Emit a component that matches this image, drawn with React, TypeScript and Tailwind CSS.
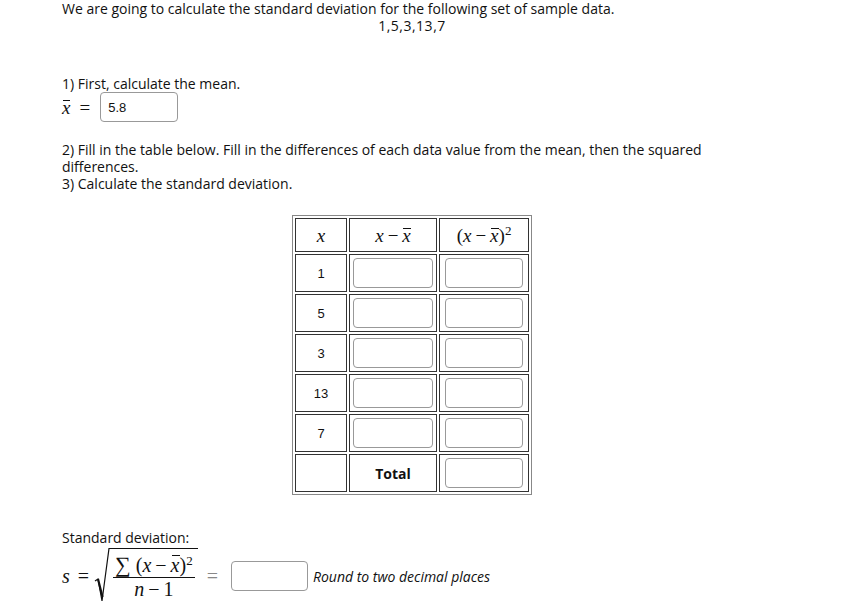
import React from "react";

const body = { fontFamily: '"Open Sans", "Noto Sans", sans-serif' };
const math = { fontFamily: '"Liberation Serif", "DejaVu Serif", serif' };
const arial = { fontFamily: '"Liberation Sans", Arial, sans-serif' };

function XBar() {
  return (
    <span className="relative inline-block italic">
      x
      <span className="absolute left-[1px] right-[0px] top-[1px] h-[1px] bg-current" />
    </span>
  );
}

function Minus() {
  return <span className="mx-[4px]">−</span>;
}

function Box({ w = "w-[78px]", children }: { w?: string; children?: React.ReactNode }) {
  return (
    <div
      className={`${w} h-[30px] rounded-[4px] border border-[#999] bg-white flex items-center px-[7px] text-[13px] text-[#111]`}
      style={arial}
    >
      {children}
    </div>
  );
}

export default function App() {
  const rows = ["1", "5", "3", "13", "7"];
  return (
    <div className="w-[861px] h-[606px] bg-white text-[#111] overflow-hidden" style={body}>
      <div className="ml-[62px] w-[700px] text-[14px] leading-[17px]">
        <div>We are going to calculate the standard deviation for the following set of sample data.</div>
        <div className="text-center tracking-[0.5px]">1,5,3,13,7</div>

        <div className="mt-[41px]">1) First, calculate the mean.</div>
        <div className="flex items-center h-[30px]">
          <span className="text-[19px] flex items-center" style={math}>
            <XBar />
            <span className="ml-[9px]">=</span>
          </span>
          <div className="ml-[10px]"><Box>5.8</Box></div>
        </div>

        <div className="mt-[19px]">
          2) Fill in the table below. Fill in the differences of each data value from the mean, then the squared differences.
        </div>
        <div>3) Calculate the standard deviation.</div>

        <div className="flex justify-center mt-[23px]">
          <table className="border-separate border-spacing-[2px] border border-[#888]">
            <thead>
              <tr className="h-[34px]">
                <th className="w-[52px] border border-[#333] font-normal text-[19px] italic" style={math}>x</th>
                <th className="w-[88px] border border-[#333] font-normal text-[19px] whitespace-nowrap" style={math}>
                  <span className="italic">x</span><Minus /><XBar />
                </th>
                <th className="w-[90px] border border-[#333] font-normal text-[19px] whitespace-nowrap" style={math}>
                  (<span className="italic">x</span><Minus /><XBar />)<sup className="text-[13px]">2</sup>
                </th>
              </tr>
            </thead>
            <tbody>
              {rows.map((r) => (
                <tr key={r} className="h-[38px]">
                  <td className="border border-[#333] text-center text-[13px]" style={arial}>{r}</td>
                  <td className="border border-[#333]">
                    <div className="flex justify-center"><Box w="w-[80px]" /></div>
                  </td>
                  <td className="border border-[#333]">
                    <div className="flex justify-center"><Box w="w-[78px]" /></div>
                  </td>
                </tr>
              ))}
              <tr className="h-[38px]">
                <td className="border border-[#333]"></td>
                <td className="border border-[#333] text-center font-bold text-[14px]">Total</td>
                <td className="border border-[#333]">
                  <div className="flex justify-center"><Box w="w-[78px]" /></div>
                </td>
              </tr>
            </tbody>
          </table>
        </div>

        <div className="mt-[34px]">Standard deviation:</div>
        <div className="flex items-center h-[60px]">
          <span className="text-[20px] italic" style={math}>s</span>
          <span className="text-[20px] ml-[8px]" style={math}>=</span>
          <div className="flex items-stretch ml-[5px] h-[56px]">
            <svg width="16" height="56" viewBox="0 0 16 56" className="block">
              <path d="M1 33 L4 31 L8 53 L15 0.5 L16 0.5" fill="none" stroke="#111" strokeWidth="1.2" />
              <path d="M4 31 L8.5 49" stroke="#111" strokeWidth="2.2" />
            </svg>
            <div className="border-t border-[#111] flex flex-col items-center justify-center px-[3px]" style={math}>
              <div className="text-[20px] leading-[22px] border-b border-[#111] px-[2px] pb-[1px] whitespace-nowrap">
                <span className="text-[22px]">∑</span> (<span className="italic">x</span><Minus /><XBar />)<sup className="text-[13px]">2</sup>
              </div>
              <div className="text-[20px] leading-[22px] whitespace-nowrap">
                <span className="italic">n</span><Minus />1
              </div>
            </div>
          </div>
          <span className="text-[20px] ml-[9px] text-[#888]" style={math}>=</span>
          <div className="ml-[13px]"><Box w="w-[77px]" /></div>
          <span className="ml-[5px] italic">Round to two decimal places</span>
        </div>
      </div>
    </div>
  );
}
